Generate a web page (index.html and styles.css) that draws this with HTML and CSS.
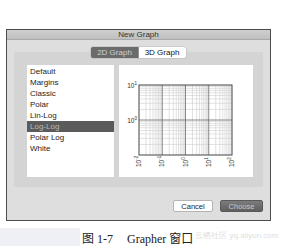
FILE: index.html
```html
<!DOCTYPE html>
<html>

<head>
    <title>New Graph</title>
    <link rel="stylesheet" href="styles.css">
</head>

<body>
    <main class="page">
        <section class="window">
            <div class="titlebar">New Graph</div>
            <div class="content">
                <div class="segments">
                    <span class="seg seg-on">2D Graph</span>
                    <span class="seg">3D Graph</span>
                </div>
                <div class="group">
                    <ul class="list">
                        <li>Default</li>
                        <li>Margins</li>
                        <li>Classic</li>
                        <li>Polar</li>
                        <li>Lin-Log</li>
                        <li class="selected">Log-Log</li>
                        <li>Polar Log</li>
                        <li>White</li>
                    </ul>
                    <div class="preview">
                        <svg width="133" height="112" viewBox="0 0 133 112" id="plot"></svg>
                    </div>
                </div>
                <div class="buttons">
                    <button class="btn">Cancel</button>
                    <button class="btn btn-dark">Choose</button>
                </div>
            </div>
        </section>
        <footer class="caption-row">
            <div class="strip"></div>
            <p class="caption"><span class="fig">图 1-7</span>Grapher 窗口</p>
            <span class="mark">云栖社区 yq.aliyun.com</span>
        </footer>
    </main>
    <script>
        !function () {
            const svg = document.getElementById("plot");
            const x0 = 20, x1 = 113, y0 = 20, y1 = 90;
            const dx = (x1 - x0) / 4, dy = (y1 - y0) / 2;
            let out = "";
            const line = (a, b, c, d, cls) => {
                out += `<line x1="${a}" y1="${b}" x2="${c}" y2="${d}" class="${cls}"/>`;
            };
            for (let i = 0; i < 4; i++) {
                for (let k = 2; k < 10; k++) {
                    const x = x0 + dx * (i + Math.log10(k));
                    line(x, y0, x, y1, "minor");
                }
            }
            for (let i = 0; i < 2; i++) {
                for (let k = 2; k < 10; k++) {
                    const y = y1 - dy * (i + Math.log10(k));
                    line(x0, y, x1, y, "minor");
                }
            }
            for (let i = 1; i < 4; i++) line(x0 + dx * i, y0, x0 + dx * i, y1, "major");
            line(x0, y0 + dy, x1, y0 + dy, "major");
            out += `<rect x="${x0}" y="${y0}" width="${x1 - x0}" height="${y1 - y0}" class="frame"/>`;
            out += `<text x="${x0 - 2}" y="${y0 + 3}" class="lbl" text-anchor="end">10<tspan class="sup" dy="-3">1</tspan></text>`;
            out += `<text x="${x0 - 2}" y="${y0 + dy + 3}" class="lbl" text-anchor="end">10<tspan class="sup" dy="-3">0</tspan></text>`;
            ["-2", "-1", "0", "1", "2"].forEach((e, i) => {
                const x = x0 + dx * i + 2;
                out += `<text transform="translate(${x} ${y1 + 12}) rotate(-90)" class="lbl">10<tspan class="sup" dy="-3">${e}</tspan></text>`;
            });
            svg.innerHTML = out;
        }()
    </script>
</body>

</html>
```

FILE: styles.css
```css
body {
    margin: 0;
    background: #fff;
    font-family: "Liberation Sans", Arial, sans-serif;
}

.page {
    width: 306px;
    height: 246px;
    padding-top: 29px;
    box-sizing: border-box;
    display: flex;
    flex-direction: column;
}

.window {
    width: 265px;
    margin-left: 6px;
    border: 1px solid #4c4c4c;
    background: #dedede;
    box-sizing: border-box;
}

.titlebar {
    height: 9px;
    line-height: 9px;
    font-size: 8px;
    color: #333;
    text-align: center;
    background: linear-gradient(#cfcfcf, #bfbfbf);
    border-bottom: 1px solid #a9a9a9;
}

.content {
    padding: 7px 7px 7px;
}

.segments {
    display: flex;
    justify-content: center;
    margin-bottom: -6px;
    position: relative;
    z-index: 1;
    padding-right: 1px;
}

.seg {
    height: 11px;
    line-height: 11px;
    font-size: 8px;
    padding: 0;
    width: 47px;
    text-align: center;
    background: #fff;
    color: #111;
    border-radius: 0 2px 2px 0;
    box-shadow: 0 0 0 0.5px #b8b8b8;
}

.seg-on {
    width: 48px;
    background: #6b6b6b;
    color: #cfcfcf;
    border-radius: 2px 0 0 2px;
}

.group {
    height: 135px;
    box-sizing: border-box;
    background: #d4d4d4;
    border-radius: 2px;
    padding: 13px 10px 10px 13px;
    display: flex;
    gap: 5px;
}

.list {
    margin: 0;
    padding: 1px 0 0;
    list-style: none;
    width: 87px;
    background: #fff;
}

.list li {
    height: 11px;
    line-height: 11px;
    font-size: 8px;
    color: #1c1c1c;
    padding-left: 3px;
}

.list li.selected {
    background: #5b5b5b;
    color: #b9b9b9;
}

.preview {
    flex: 1;
    background: #fff;
}

.preview svg {
    display: block;
}

.minor {
    stroke: #cfcfcf;
    stroke-width: 0.6;
}

.major {
    stroke: #6a6a6a;
    stroke-width: 0.8;
}

.frame {
    fill: none;
    stroke: #444;
    stroke-width: 1;
}

.lbl {
    font-family: "Liberation Sans", Arial, sans-serif;
    font-size: 6.5px;
    fill: #333;
}

.sup {
    font-size: 4.5px;
}

.buttons {
    display: flex;
    justify-content: flex-end;
    gap: 7px;
    margin-top: 13px;
    padding-bottom: 1px;
}

.btn {
    height: 12px;
    width: 40px;
    padding: 0;
    font-family: "Liberation Sans", Arial, sans-serif;
    font-size: 7.5px;
    color: #222;
    background: #fff;
    border: 1px solid #b4b4b4;
    border-radius: 2px;
}

.btn-dark {
    width: 43px;
    color: #c9c9c9;
    background: linear-gradient(#7c7c7c, #5f5f5f);
    border-color: #5a5a5a;
}

.caption-row {
    display: flex;
    align-items: center;
    margin-top: 7px;
    height: 19px;
}

.strip {
    width: 80px;
    height: 19px;
    background: #eef0f6;
}

.caption {
    margin: 0 0 0 2px;
    font-family: "Liberation Serif", "Noto Sans CJK SC", serif;
    font-size: 12px;
    color: #222;
    white-space: nowrap;
}

.fig {
    margin-right: 14px;
}

.mark {
    margin-left: 2px;
    font-size: 8px;
    color: #e0e0e0;
    white-space: nowrap;
    align-self: flex-start;
    margin-top: 2px;
}
```
